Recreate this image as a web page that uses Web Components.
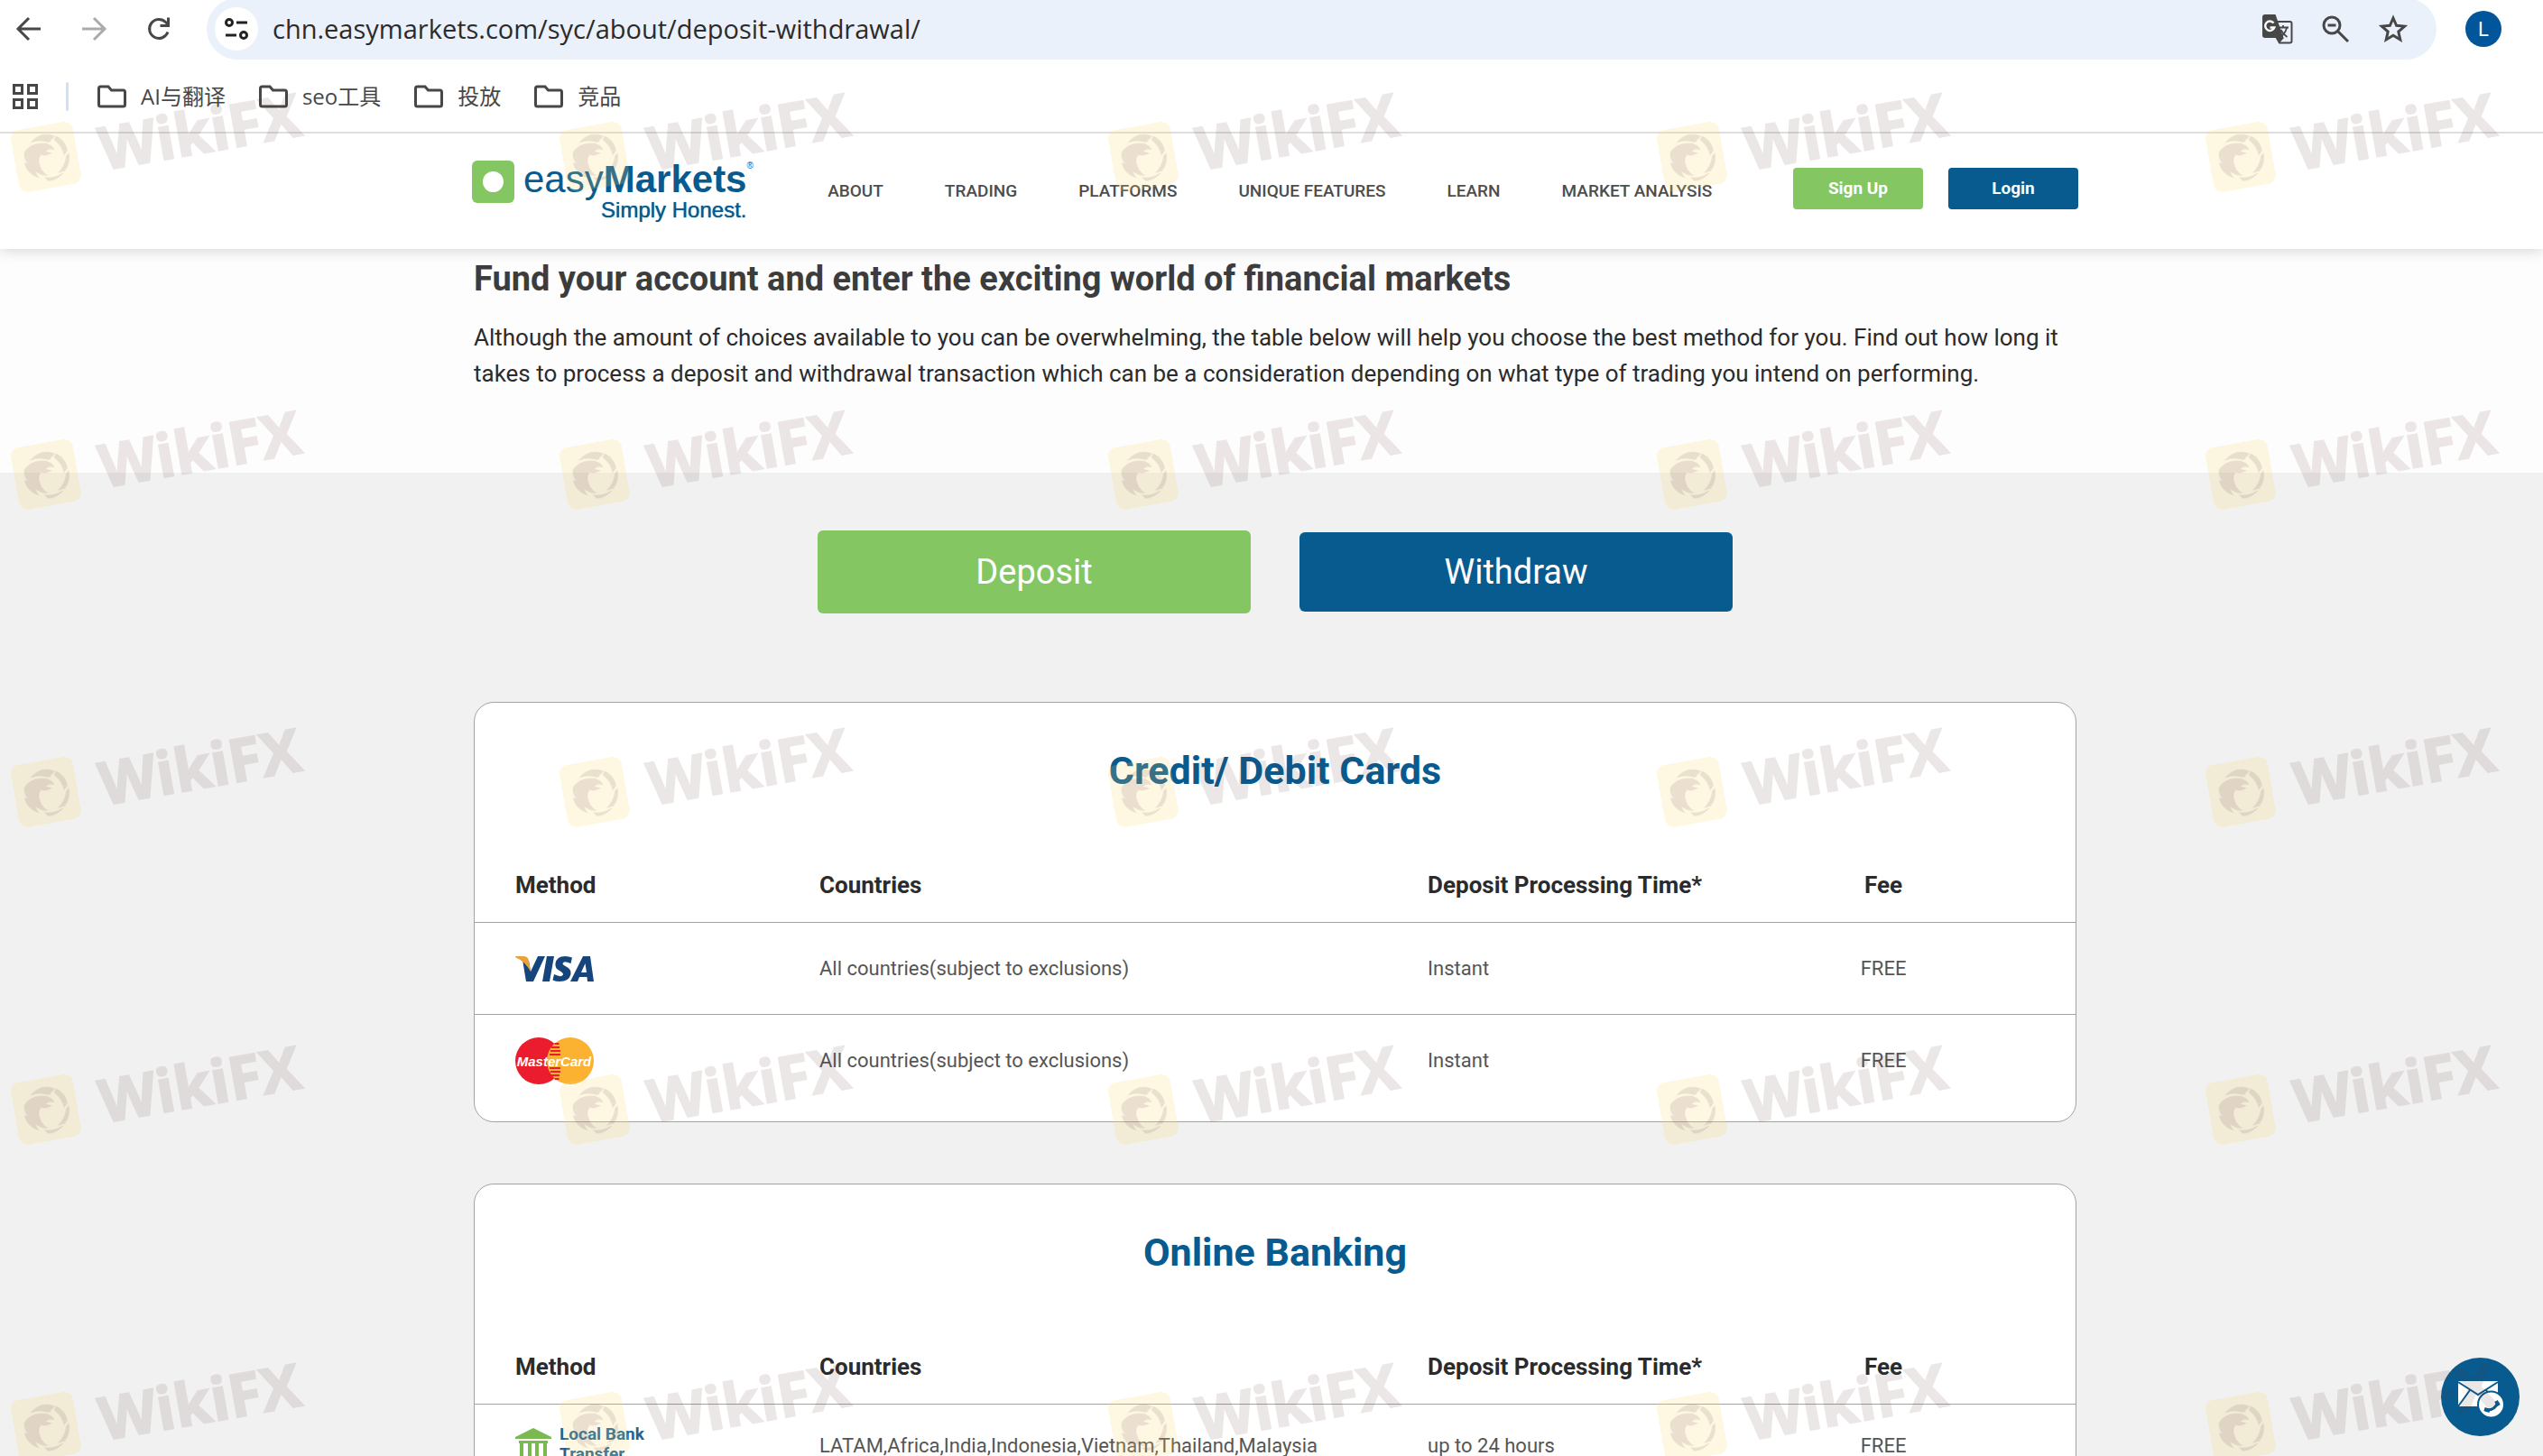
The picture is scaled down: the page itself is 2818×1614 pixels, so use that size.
<!DOCTYPE html>
<html lang="en">
<head>
<meta charset="utf-8">
<title>Deposit &amp; Withdrawal | easyMarkets</title>
<style>
    body {
        margin: 0;
        font-family: Roboto, "Liberation Sans", "Noto Sans CJK SC", sans-serif;
        background: #fff;
        --brand-blue: #075b8f;
        --brand-green: #84c762;
        --line: #a2a2a2;
        --grey: #f1f1f1;
    }
</style>
</head>
<body>
<browser-window>
    <browser-toolbar slot="chrome" url="chn.easymarkets.com/syc/about/deposit-withdrawal/" user="L"></browser-toolbar>
    <bookmark-bar slot="chrome">
        <bookmark-folder>AI与翻译</bookmark-folder>
        <bookmark-folder>seo工具</bookmark-folder>
        <bookmark-folder>投放</bookmark-folder>
        <bookmark-folder>竞品</bookmark-folder>
    </bookmark-bar>

    <site-header></site-header>
    <page-intro>
        <span slot="title">Fund your account and enter the exciting world of financial markets</span>
        Although the amount of choices available to you can be overwhelming, the table below will help you choose the best method for you. Find out how long it takes to process a deposit and withdrawal transaction which can be a consideration depending on what type of trading you intend on performing.
    </page-intro>
    <payment-methods>
        <method-card kind="cards">Credit/ Debit Cards</method-card>
        <method-card kind="banking">Online Banking</method-card>
    </payment-methods>
    <contact-button slot="overlay"></contact-button>
    <water-mark slot="overlay"></water-mark>
</browser-window>

<script>
/* Small helper: open shadow root filled from a markup string */
class BaseElement extends HTMLElement {
    connectedCallback() {
        if (this.shadowRoot) return;
        this.attachShadow({ mode: 'open' });
        this.shadowRoot.innerHTML = this.template();
    }
}

class BrowserWindow extends BaseElement {
    template() {
        return `
            <style>
                :host { position: relative; display: flex; flex-direction: column; height: 100vh; overflow: hidden; }
                .page { flex: 1; min-height: 0; overflow: hidden; background: var(--grey); }
            </style>
            <slot name="chrome"></slot>
            <div class="page"><slot></slot></div>
            <slot name="overlay"></slot>
        `;
    }
}

class BrowserToolbar extends BaseElement {
    template() {
        return `
            <style>
                :host { display: flex; align-items: center; height: 64px; flex-shrink: 0; padding: 0 46px 0 8px; }
                button { border: 0; padding: 0; background: none; color: #474747; display: grid; place-items: center; width: 48px; height: 48px; border-radius: 50%; font: inherit; }
                svg { display: block; width: 36px; height: 36px; }
                .history { display: flex; gap: 24px; margin-right: 29px; }
                .history [disabled] { color: #ababab; }
                .omnibox { flex: 1; display: flex; align-items: center; height: 68px; padding: 0 24px 0 9px; border-radius: 34px; background: #ebf1fa; }
                .info { background: #fff; color: #222; }
                input { flex: 1; min-width: 0; margin-left: 16px; padding: 0; border: 0; outline: 0; background: none; color: #2b2b2b; font: 29px/40px "Open Sans", "Noto Sans", sans-serif; }
                .tools { display: flex; gap: 16px; }
                .avatar { width: 40px; height: 40px; margin-left: 32px; background: #00559b; color: #fff; font-size: 22px; }
            </style>
            <div class="history">
                <button aria-label="Back"><svg viewBox="0 0 36 36" fill="none" stroke="currentColor" stroke-width="3"><path d="M31 18H7M18 6L6 18l12 12"/></svg></button>
                <button aria-label="Forward" disabled><svg viewBox="0 0 36 36" fill="none" stroke="currentColor" stroke-width="3"><path d="M5 18h24M18 6l12 12-12 12"/></svg></button>
                <button aria-label="Reload"><svg viewBox="0 0 36 36" fill="none" stroke="currentColor" stroke-width="3"><path d="M28 21.500a10.500 10.500 0 1 1-2.500-11l3 3"/><path d="M28.500 5.500v9h-9"/></svg></button>
            </div>
            <div class="omnibox">
                <button class="info" aria-label="View site information"><svg viewBox="0 0 36 36" fill="none" stroke="currentColor" stroke-width="3"><circle cx="10" cy="11" r="3.500"/><path d="M18 11h12M6 25h12"/><circle cx="26" cy="25" r="3.500"/></svg></button>
                <input type="text" aria-label="Address" value="${this.getAttribute('url')}">
                <div class="tools">
                    <button aria-label="Translate">
                        <svg viewBox="0 0 36 36" fill="none">
                            <path d="M16 10h15.500q2 0 2 2v19.500q0 2-2 2H20l-4-7" stroke="#474747" stroke-width="2"/>
                            <path d="M4 2h11.500l9 26H4q-3 0-3-3V5q0-3 3-3z" fill="#474747"/>
                            <path d="M17 27l3 6.500 5-5.500z" fill="#474747"/>
                            <path d="M13.500 11.500a5.200 5.200 0 1 0 .8 5H9.500" stroke="#fff" stroke-width="2.400"/>
                            <path d="M19 16.500h11M24 14v2.500M28 17q-2 7-7.500 10.500M21.500 19q2.500 5 7 8" stroke="#474747" stroke-width="1.800"/>
                        </svg>
                    </button>
                    <button aria-label="Zoom"><svg viewBox="0 0 36 36" fill="none" stroke="currentColor" stroke-width="3"><circle cx="14" cy="14" r="9"/><path d="M20.500 20.500L32 32M9.500 14h9"/></svg></button>
                    <button aria-label="Bookmark this tab"><svg viewBox="0 0 36 36" fill="none" stroke="currentColor" stroke-width="3"><path d="M18 6l3.600 8.300 9 .8-6.800 6 2 8.900L18 25.300l-7.800 4.700 2-8.900-6.800-6 9-.8z"/></svg></button>
                </div>
            </div>
            <button class="avatar" aria-label="Profile">${this.getAttribute('user')}</button>
        `;
    }
}

class BookmarkBar extends BaseElement {
    template() {
        return `
            <style>
                :host { display: flex; align-items: center; height: 78px; flex-shrink: 0; padding: 4px 0 0 14px; border-bottom: 2px solid #dedede; }
                button { border: 0; padding: 0; background: none; color: #474747; }
                svg { display: block; width: 28px; height: 28px; }
                hr { width: 3px; height: 32px; margin: 0 32px 0 31px; border: 0; border-radius: 2px; background: #cfe0f7; }
                .folders { display: flex; gap: 37px; }
            </style>
            <button aria-label="All apps"><svg viewBox="0 0 28 28" fill="none" stroke="currentColor" stroke-width="3"><path d="M1.500 1.500h9v9h-9zM17.500 1.500h9v9h-9zM1.500 17.500h9v9h-9zM17.500 17.500h9v9h-9z"/></svg></button>
            <hr>
            <div class="folders"><slot></slot></div>
        `;
    }
}

class BookmarkFolder extends BaseElement {
    template() {
        return `
            <style>
                button { display: flex; align-items: center; gap: 16px; border: 0; padding: 0; background: none; color: #474747; font: 24px/36px "Open Sans", "Noto Sans CJK SC", sans-serif; }
                svg { width: 32px; height: 26px; }
            </style>
            <button>
                <svg viewBox="0 0 32 26" fill="none" stroke="currentColor" stroke-width="3"><path d="M3.500 2H12l3.500 4h13q2 0 2 2v14q0 2-2 2h-25q-2 0-2-2V4q0-2 2-2z"/></svg>
                <span><slot></slot></span>
            </button>
        `;
    }
}

class SiteLogo extends BaseElement {
    template() {
        return `
            <style>
                :host { display: block; color: var(--brand-blue); font-family: "Liberation Sans", Arial, sans-serif; }
                a { display: flex; gap: 10px; color: inherit; text-decoration: none; }
                svg { width: 47px; height: 47px; }
                .name { display: flex; flex-direction: column; align-items: flex-end; }
                .word { display: flex; font-size: 42px; line-height: 42px; }
                sup { font-size: 10px; line-height: 12px; width: 0; }
                .tagline { font-size: 24px; line-height: 26px; text-shadow: 0 0 1px currentColor; }
            </style>
            <a href="#" aria-label="easyMarkets home">
                <svg viewBox="0 0 47 47"><rect width="47" height="47" rx="6" fill="#84c762"/><circle cx="23.500" cy="23.500" r="11.500" fill="#fff"/></svg>
                <span class="name">
                    <span class="word"><span>easy</span><b>Markets</b><sup>®</sup></span>
                    <span class="tagline">Simply Honest.</span>
                </span>
            </a>
        `;
    }
}

class SiteHeader extends BaseElement {
    template() {
        const links = ['ABOUT', 'TRADING', 'PLATFORMS', 'UNIQUE FEATURES', 'LEARN', 'MARKET ANALYSIS'];
        return `
            <style>
                :host { display: block; position: relative; padding-left: 8px; background: #fff; box-shadow: 0 2px 14px rgba(0,0,0,0.16); }
                .bar { display: flex; align-items: flex-start; max-width: 1780px; height: 98px; margin: 0 auto; padding-top: 30px; }
                nav { display: flex; gap: 68px; margin: 21px auto 0; }
                nav a { color: #4d4d4d; font-size: 19px; font-weight: 500; line-height: 26px; text-decoration: none; white-space: nowrap; }
                .account { display: flex; gap: 28px; margin-top: 8px; }
                button { width: 144px; height: 46px; border: 0; border-radius: 4px; color: #fff; font: bold 19px/26px Roboto, sans-serif; }
                .signup { background: var(--brand-green); }
                .login { background: var(--brand-blue); }
            </style>
            <div class="bar">
                <site-logo></site-logo>
                <nav>${links.map(l => `<a href="#">${l}</a>`).join('')}</nav>
                <div class="account">
                    <button class="signup">Sign Up</button>
                    <button class="login">Login</button>
                </div>
            </div>
        `;
    }
}

class PageIntro extends BaseElement {
    template() {
        return `
            <style>
                :host { display: block; padding: 11px 0 90px 8px; background: #fdfdfd; }
                .inner { max-width: 1776px; margin: 0 auto; }
                h1 { margin: 0 0 23px; color: #3c3c3c; font-size: 38px; line-height: 44px; }
                p { margin: 0; color: #2b2b2b; font-size: 26px; line-height: 40px; }
            </style>
            <div class="inner">
                <h1><slot name="title"></slot></h1>
                <p><slot></slot></p>
            </div>
        `;
    }
}

class PaymentMethods extends BaseElement {
    template() {
        return `
            <style>
                :host { display: block; padding: 64px 0 68px 8px; }
                .actions { display: flex; justify-content: center; align-items: center; gap: 54px; margin-bottom: 98px; }
                button { width: 480px; height: 88px; border: 0; border-radius: 6px; color: #fff; background: var(--brand-blue); font: 38px/46px Roboto, sans-serif; }
                .active { height: 92px; background: var(--brand-green); }
                .cards { display: flex; flex-direction: column; gap: 68px; max-width: 1776px; margin: 0 auto; }
            </style>
            <div class="actions">
                <button class="active">Deposit</button>
                <button>Withdraw</button>
            </div>
            <div class="cards"><slot></slot></div>
        `;
    }
}

const LOGOS = {
    visa: `
        <svg width="87" height="28" viewBox="0 0 87 28" role="img" aria-label="Visa" fill="#15457c">
            <path d="M8 4l4 24h8L33 0h-8l-8 17L15 5z"/>
            <path d="M35 0h8l-5 28h-8z"/>
            <path d="M63 1.500L61.500 8q-8-3.500-9 0 0 1.500 4 3.500 6 3 5 8.500-2 8-12.500 8-4 0-7.500-1.500L43 20q8 4 10 .5.500-2-4-4.500-5.500-3-4.500-8Q46 0 55 0q4.500 0 8 1.500z"/>
            <path fill-rule="evenodd" d="M75 0h8l4 28h-7l-.5-5H71l-2 5h-8zM77.500 8L73 18h6z"/>
            <path d="M0 0h9q5 0 6 5l2 12Q11 6 0 1z" fill="#eba13b"/>
        </svg>`,
    mastercard: `
        <svg width="87" height="52" viewBox="0 0 87 52" role="img" aria-label="MasterCard">
            <circle cx="26" cy="26" r="26" fill="#eb1c2d"/>
            <circle cx="61" cy="26" r="26" fill="#fbb231"/>
            <path d="M43.500 7h5M40 11h9M39 15h11M38 19h12M38 34h12M39 38h11M40 42h9M43.500 46h5" stroke="#eb1c2d" stroke-width="2"/>
            <text x="43" y="32" text-anchor="middle" fill="#fff" font-family="Liberation Sans, sans-serif" font-size="15" font-weight="700" font-style="italic">MasterCard</text>
        </svg>`,
    bank: `
        <span class="bank">
            <svg width="40" height="36" viewBox="0 0 40 36" fill="#7ab950" aria-hidden="true">
                <path d="M20 0l20 10v2H0v-2z"/><path d="M4 14h32v3H4zM5 17h4v15H5zM14 17h4v15h-4zM22 17h4v15h-4zM31 17h4v15h-4zM2 32h36v4H2z"/>
            </svg>
            <b>Local Bank<br>Transfer</b>
        </span>`
};

const METHODS = {
    cards: [
        { logo: 'visa', countries: 'All countries(subject to exclusions)', time: 'Instant', fee: 'FREE' },
        { logo: 'mastercard', countries: 'All countries(subject to exclusions)', time: 'Instant', fee: 'FREE' }
    ],
    banking: [
        { logo: 'bank', countries: 'LATAM,Africa,India,Indonesia,Vietnam,Thailand,Malaysia', time: 'up to 24 hours', fee: 'FREE' }
    ]
};

class MethodCard extends BaseElement {
    template() {
        const kind = this.getAttribute('kind');
        return `
            <style>
                :host { display: block; padding: 50px 0 17px; border: 1px solid var(--line); border-radius: 22px; background: #fff; }
                h2 { margin: 0 0 60px; color: var(--brand-blue); font-size: 43px; line-height: 50px; text-align: center; }
                table { width: 100%; table-layout: fixed; border-collapse: separate; border-spacing: 0; }
                th, td { box-sizing: border-box; padding: 0; text-align: left; vertical-align: middle; white-space: nowrap; }
                th { height: 83px; color: #2b2b2b; font-size: 26px; line-height: 30px; }
                td { height: 102px; border-top: 1px solid var(--line); color: #555; font-size: 22px; line-height: 30px; }
                .banking td { height: 92px; }
                th:first-child, td:first-child { padding-left: 45px; }
                th:last-child, td:last-child { padding-right: 45px; text-align: center; }
                .method { width: 382px; }
                .countries { width: 38%; }
                .time { width: 19%; }
                svg { display: block; }
                .bank { display: flex; align-items: flex-start; gap: 9px; color: #1b6696; font-size: 19px; line-height: 22px; }
                .bank b { margin-top: -4px; }
            </style>
            <h2><slot></slot></h2>
            <table class="${kind}">
                <thead>
                    <tr><th class="method">Method</th><th class="countries">Countries</th><th class="time">Deposit Processing Time*</th><th>Fee</th></tr>
                </thead>
                <tbody>
                    ${METHODS[kind].map(m => `
                        <tr><td>${LOGOS[m.logo]}</td><td>${m.countries}</td><td>${m.time}</td><td>${m.fee}</td></tr>
                    `).join('')}
                </tbody>
            </table>
        `;
    }
}

class ContactButton extends BaseElement {
    template() {
        return `
            <style>
                :host { position: absolute; right: 26px; bottom: 22px; }
                button { display: block; width: 87px; height: 87px; padding: 0; border: 0; border-radius: 50%; background: var(--brand-blue); }
                svg { display: block; }
            </style>
            <button aria-label="Contact us">
                <svg width="87" height="87" viewBox="0 0 87 87" fill="none" stroke="#075b8f" stroke-width="2">
                    <path d="M19 26h44v28H19z" fill="#fff" stroke="none"/>
                    <path d="M19 27l22 14 22-14M19 54l13-18M63 54L50 36"/>
                    <circle cx="55.500" cy="52" r="14.500" fill="#fff"/>
                    <path d="M49 58q11 1 14-9" stroke-width="3"/>
                    <path d="M48 57l6 2M61 48l3 5" stroke-width="4"/>
                </svg>
            </button>
        `;
    }
}

/* Tiled mark laid over the whole window */
class WaterMark extends BaseElement {
    template() {
        const mark = `
            <div class="mark">
                <svg width="70" height="70" viewBox="0 0 70 70">
                    <rect width="70" height="70" rx="10" fill="#f9d56e" opacity="0.200"/>
                    <g fill="#6b4a5a" opacity="0.130">
                        <path d="M20 17Q34 5 49 14L41 20Q30 14 20 17z"/>
                        <path d="M50 14q9 6 10 18l-5 5q0-10-8-19z"/>
                        <path d="M61 35q0 12-8 19l-8 1q10-8 12-17z"/>
                        <path d="M51 56q-8 7-18 6l-4-5q11 3 20-1z"/>
                        <path d="M12 26q8-9 20-7 11 1 14 10-6-3-10 0l7 3q-8 3-13 0-5 4-3 12 1 7 7 12-9-1-13-7 0 4 3 8Q11 51 10 37l4 2q-4-6-2-13z"/>
                    </g>
                </svg>
                <span>WikiFX</span>
            </div>`;
        return `
            <style>
                :host { position: absolute; inset: 0; overflow: hidden; pointer-events: none; display: grid; grid-template-columns: repeat(auto-fill, 608px); grid-auto-rows: 352px; padding: 112px 0 0 14px; margin-right: -400px; }
                .mark { display: flex; align-items: center; gap: 25px; width: 322px; height: 80px; transform: rotate(-10deg); }
                span { color: #603030; -webkit-text-stroke: 2px #603030; opacity: 0.110; font: bold 66px/80px "Open Sans", sans-serif; }
            </style>
            ${mark.repeat(25)}
        `;
    }
}

customElements.define('browser-window', BrowserWindow);
customElements.define('browser-toolbar', BrowserToolbar);
customElements.define('bookmark-bar', BookmarkBar);
customElements.define('bookmark-folder', BookmarkFolder);
customElements.define('site-logo', SiteLogo);
customElements.define('site-header', SiteHeader);
customElements.define('page-intro', PageIntro);
customElements.define('payment-methods', PaymentMethods);
customElements.define('method-card', MethodCard);
customElements.define('contact-button', ContactButton);
customElements.define('water-mark', WaterMark);
</script>
</body>
</html>
